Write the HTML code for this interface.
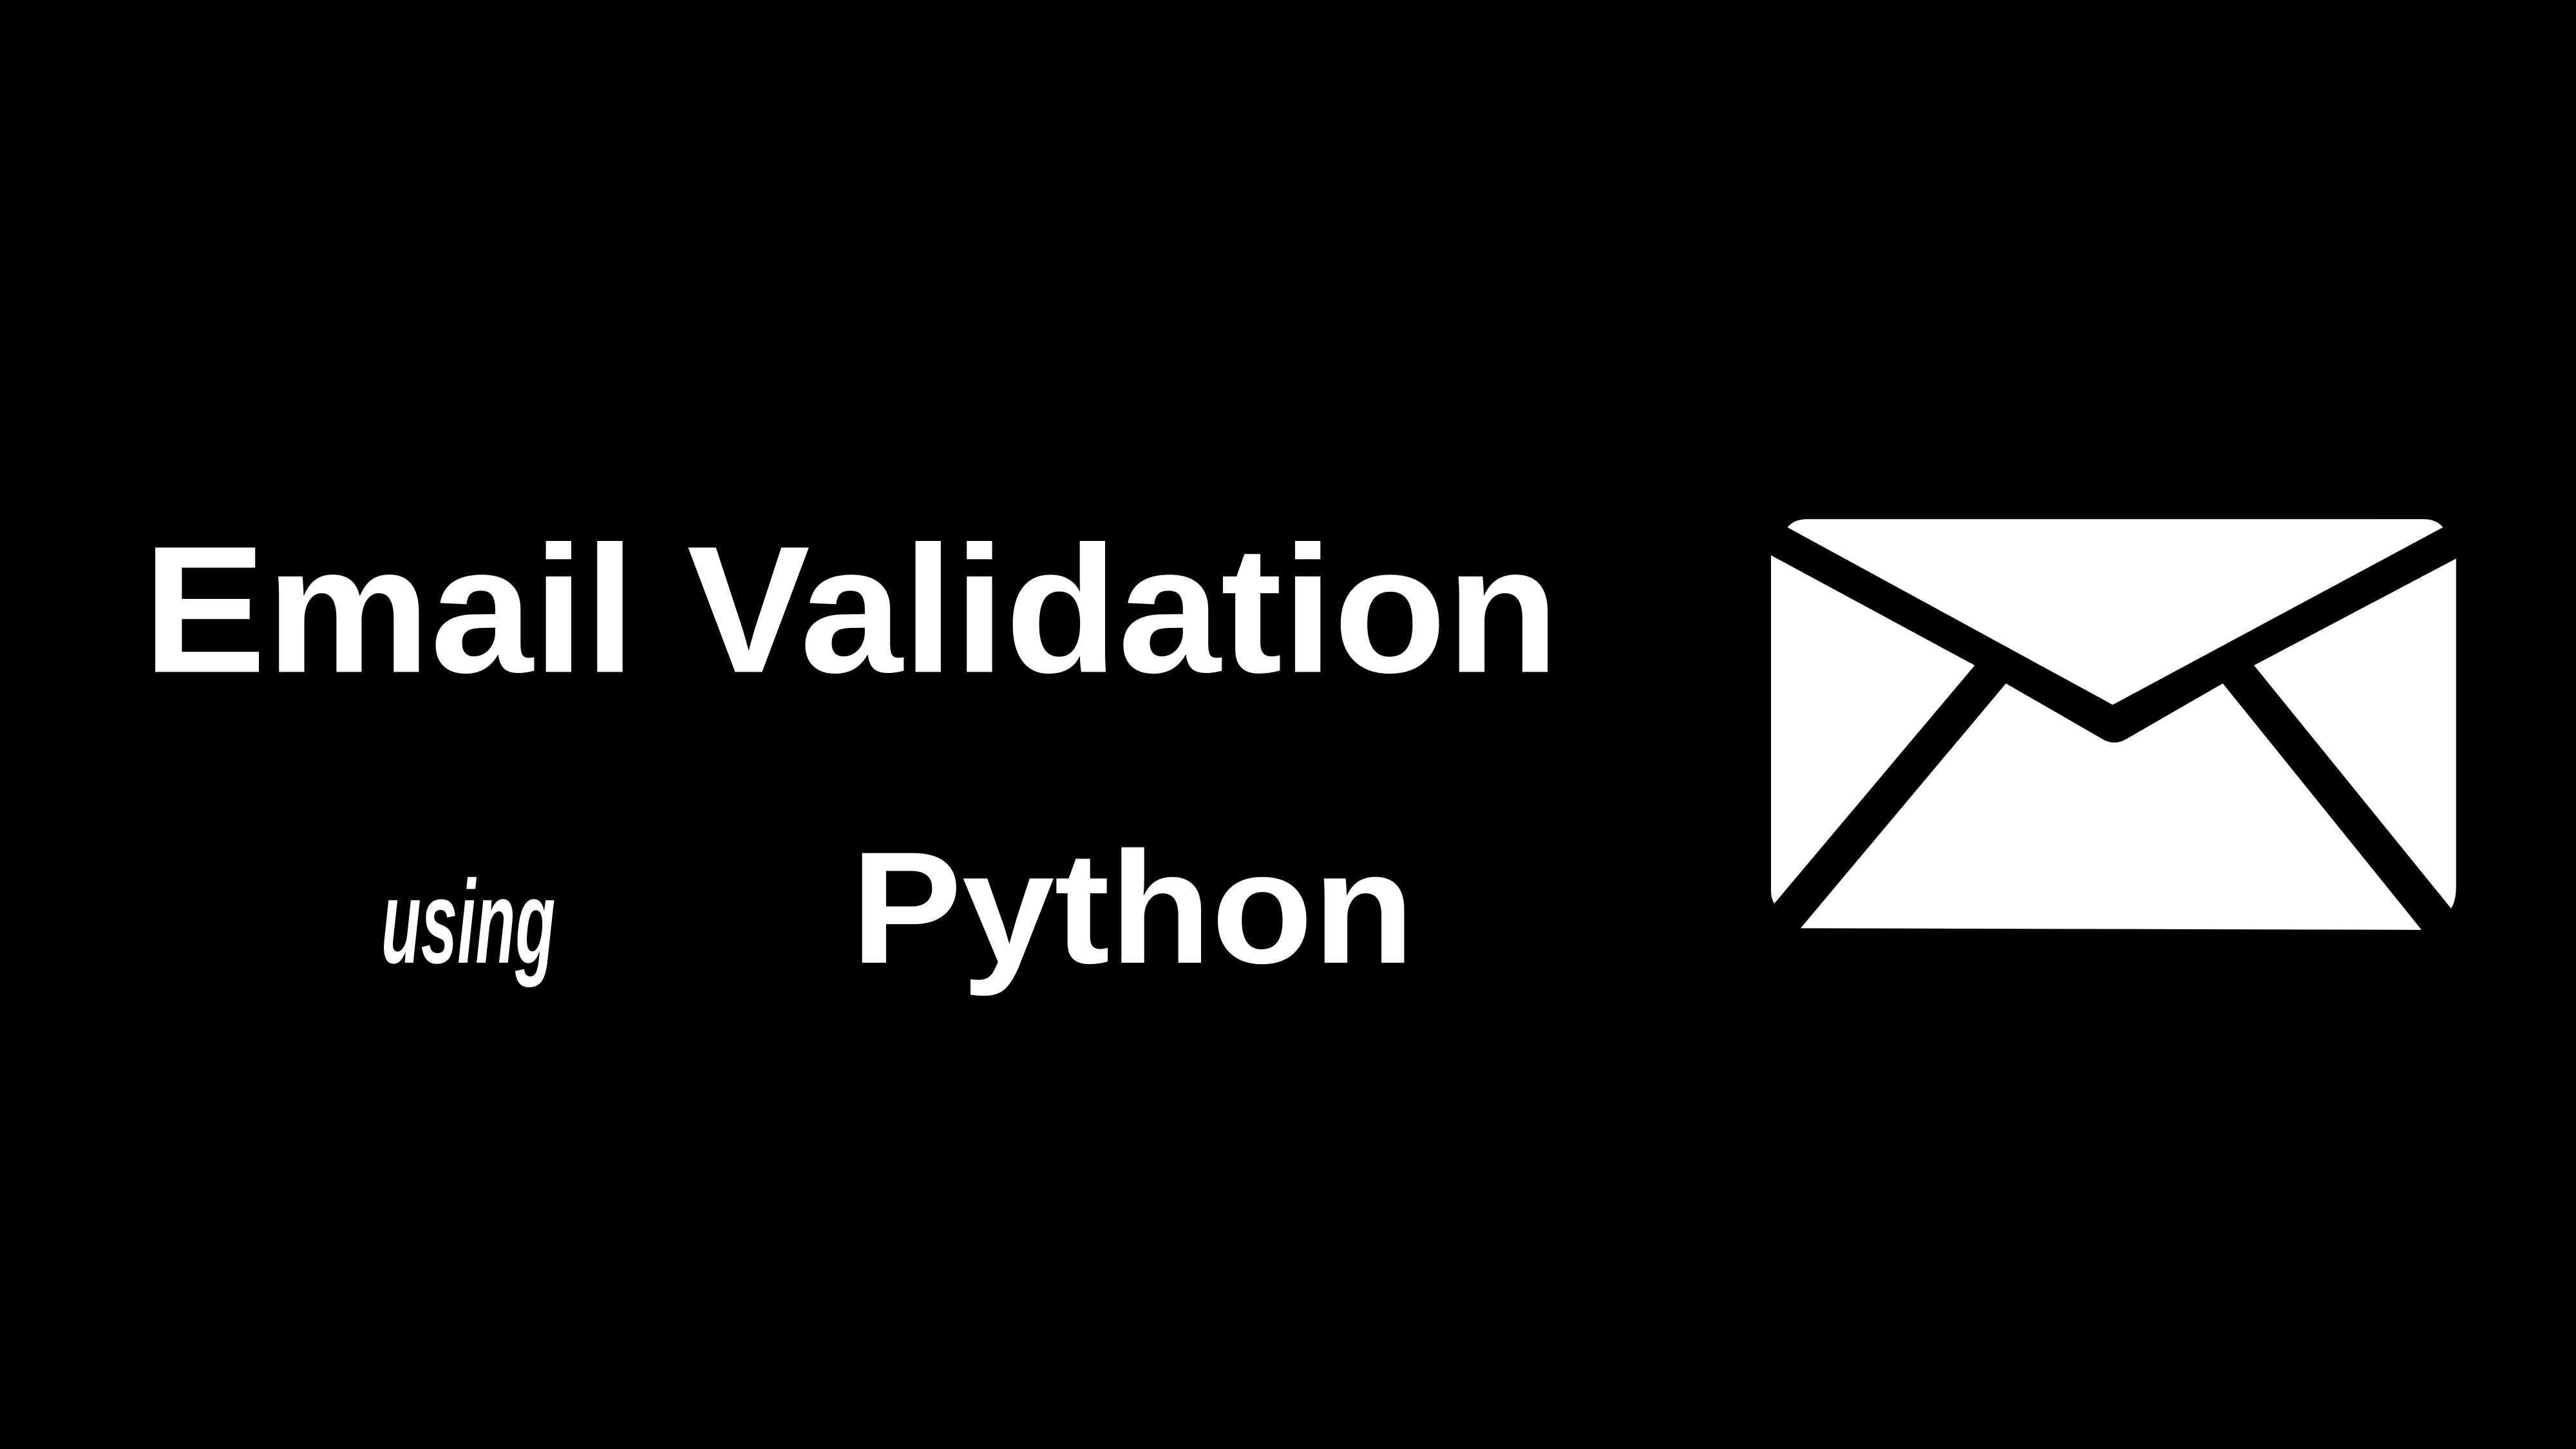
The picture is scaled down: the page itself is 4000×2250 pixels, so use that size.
<!DOCTYPE html>
<html><head><meta charset="utf-8"><style>
html,body{margin:0;padding:0;background:#000;}
svg{display:block;}
</style></head><body>
<svg width="4000" height="2250" viewBox="0 0 1568 882" preserveAspectRatio="none" xmlns="http://www.w3.org/2000/svg">
<rect width="1568" height="882" fill="#000"/>
<text x="87" y="409" font-family="Liberation Sans, sans-serif" font-weight="bold" font-size="110" fill="#fff" textLength="862" lengthAdjust="spacingAndGlyphs">Email  Validation</text>
<text x="232" y="586" font-family="Liberation Sans, sans-serif" font-style="italic" font-weight="bold" font-size="72" fill="#fff" textLength="106" lengthAdjust="spacingAndGlyphs">using</text>
<text x="518" y="586" font-family="Liberation Sans, sans-serif" font-weight="bold" font-size="97" fill="#fff" textLength="343" lengthAdjust="spacingAndGlyphs">Python</text>
<g fill="#fff">
<path d="M1088,321 Q1092,316 1100,316 L1475,316 Q1483,316 1487,321 L1286,429 Z"/>
<path d="M1078,338 L1202,405 L1080,550 Q1078,547 1078,542 Z"/>
<path d="M1495,340 L1372,405 L1492,553 Q1495,548 1495,540 Z"/>
<path d="M1096,565 L1221,416 L1280,450 Q1287,454 1294,450 L1353,416 L1474,566 Z"/>
</g>
</svg>
</body></html>
